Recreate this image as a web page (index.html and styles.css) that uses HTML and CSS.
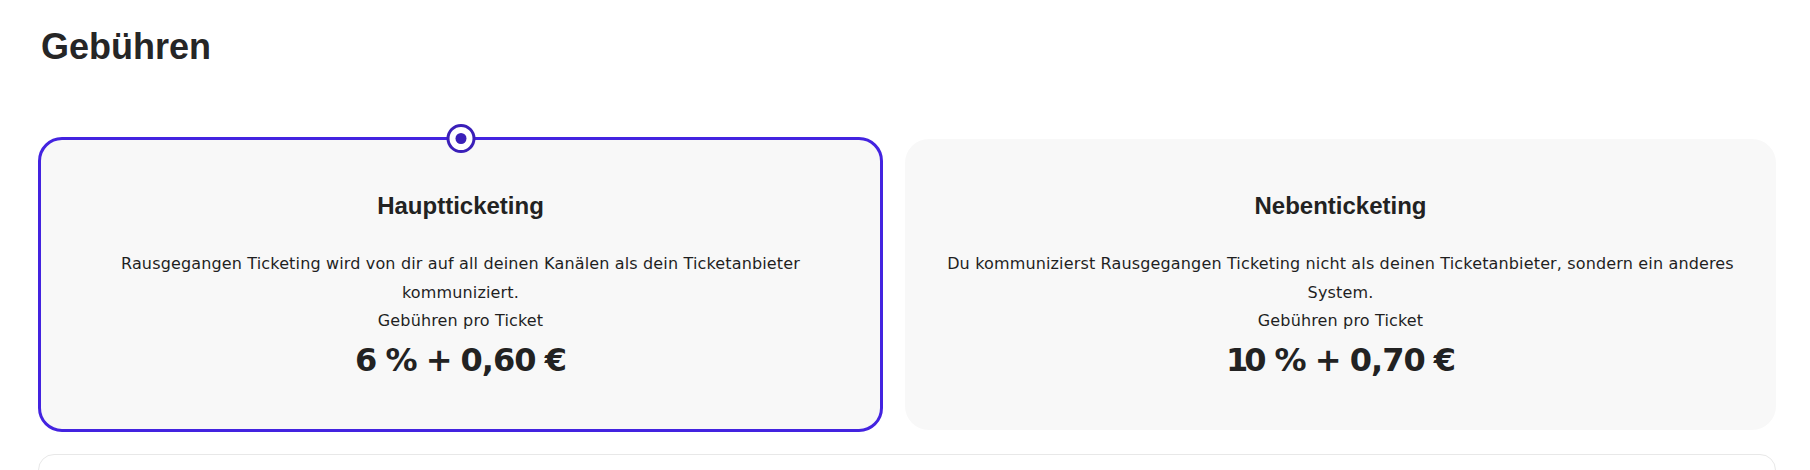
FILE: index.html
```html
<!DOCTYPE html>
<html lang="de">
<head>
<meta charset="utf-8">
<title>Gebühren</title>
<link rel="stylesheet" href="styles.css">
</head>
<body>
<main class="page">
  <h1 class="page-title">Gebühren</h1>
  <div class="options">
    <div class="option option--selected">
      <span class="radio"><span class="radio-dot"></span></span>
      <h2 class="option-title">Hauptticketing</h2>
      <p class="option-text">Rausgegangen Ticketing wird von dir auf all deinen Kanälen als dein Ticketanbieter kommuniziert.</p>
      <p class="option-text">Gebühren pro Ticket</p>
      <p class="option-price">6 % + 0,60 €</p>
    </div>
    <div class="option">
      <h2 class="option-title">Nebenticketing</h2>
      <p class="option-text">Du kommunizierst Rausgegangen Ticketing nicht als deinen Ticketanbieter, sondern ein anderes System.</p>
      <p class="option-text">Gebühren pro Ticket</p>
      <p class="option-price"><span class="digit-one">1</span>0 % + 0,70 €</p>
    </div>
  </div>
  <div class="next-panel"></div>
</main>
</body>
</html>
```

FILE: styles.css
```css
html, body {
  margin: 0;
  padding: 0;
  background: #ffffff;
}

body {
  font-family: "DejaVu Sans", sans-serif;
  color: #222222;
  overflow: hidden;
}

.page {
  padding: 25px 0 0 38px;
  width: 1738px;
}

.page-title {
  margin: 0 0 0 3px;
  font-family: "Liberation Sans", Arial, sans-serif;
  font-weight: 700;
  font-size: 36px;
  line-height: 44px;
  color: #262626;
}

.options {
  margin-top: 68px;
  display: grid;
  grid-template-columns: 845px 871px;
  column-gap: 22px;
  align-items: center;
}

.option {
  position: relative;
  box-sizing: border-box;
  background: #f8f8f8;
  border: 1px solid transparent;
  border-radius: 24px;
  padding: 52px 32px 49px;
  text-align: center;
}

.option--selected {
  border: 3px solid #4323e0;
}

.radio {
  position: absolute;
  top: -16px;
  left: 50%;
  transform: translateX(-50%);
  box-sizing: border-box;
  width: 29px;
  height: 29px;
  border: 3px solid #3a1fb8;
  border-radius: 50%;
  background: #ffffff;
  display: flex;
  align-items: center;
  justify-content: center;
}

.radio-dot {
  width: 11px;
  height: 11px;
  border-radius: 50%;
  background: #3a1fb8;
}

.option-title {
  margin: 0 0 30px;
  font-family: "Liberation Sans", Arial, sans-serif;
  font-weight: 700;
  font-size: 24px;
  line-height: 28px;
  color: #222222;
}

.option-text {
  margin: 0;
  font-size: 16px;
  line-height: 28.5px;
  letter-spacing: 0.15px;
  color: #1f1f1f;
}

.option-price {
  margin: 4px 0 0;
  font-weight: 700;
  font-size: 32px;
  line-height: 40px;
  letter-spacing: -1px;
  word-spacing: -1px;
  color: #222222;
}

.digit-one {
  letter-spacing: -4px;
}

.next-panel {
  margin-top: 22px;
  height: 200px;
  box-sizing: border-box;
  border: 1px solid #e8e8e8;
  border-radius: 16px;
  background: #ffffff;
}
```
